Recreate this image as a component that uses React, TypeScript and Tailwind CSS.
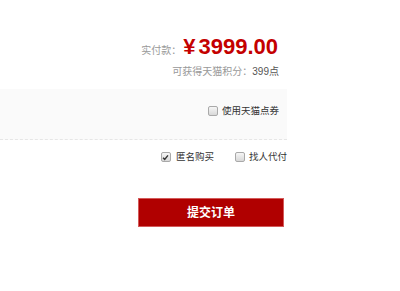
const font = "font-['Liberation_Sans','Noto_Sans_CJK_SC',sans-serif]";

function Check({ checked }: { checked?: boolean }) {
  return (
    <span className="relative inline-flex h-[10px] w-[10px] shrink-0 items-center justify-center rounded-[2px] border border-[#a9a9a9] bg-gradient-to-b from-[#f6f6f6] to-[#d8d8d8]">
      {checked && (
        <svg viewBox="0 0 8 8" className="h-[7px] w-[7px]">
          <path d="M1.2 4.2 L3.1 6.1 L6.8 1.6" fill="none" stroke="#333" strokeWidth="1.6" />
        </svg>
      )}
    </span>
  );
}

export default function App() {
  return (
    <div className={`h-[291px] w-[400px] bg-white ${font}`}>
      <div className="flex w-[287px] flex-col">
        <div className="flex items-baseline justify-end pr-[9px] pt-[36px]">
          <span className="text-[10px] text-[#999]">实付款：</span>
          <span className="ml-[2px] text-[22px] font-bold leading-none text-[#c40000]">
            <span className="mr-[3px]">¥</span>3999.00
          </span>
        </div>
        <div className="mt-[7px] flex justify-end pr-[8px] text-[10px] leading-[14px] text-[#999]">
          可获得天猫积分：<span className="text-[#555]">399点</span>
        </div>
        <div className="mt-[10px] flex h-[51px] items-center justify-end border-b border-dashed border-[#e6e6e6] bg-[#fafafa] pb-[6px] pr-[8px]">
          <label className="flex items-center gap-[4px] text-[9.5px] text-[#333]">
            <Check />
            使用天猫点券
          </label>
        </div>
        <div className="mt-[11px] flex items-center justify-end gap-[21px] text-[9.5px] leading-[12px] text-[#333]">
          <label className="flex items-center gap-[5px]">
            <Check checked />
            匿名购买
          </label>
          <label className="flex items-center gap-[4px]">
            <Check />
            找人代付
          </label>
        </div>
        <div className="mt-[35px] flex justify-end pr-[3px]">
          <button className="flex h-[29px] w-[146px] items-center justify-center border border-[#d45a5a] bg-[#b00000] text-[12px] font-bold text-white">
            提交订单
          </button>
        </div>
      </div>
    </div>
  );
}
